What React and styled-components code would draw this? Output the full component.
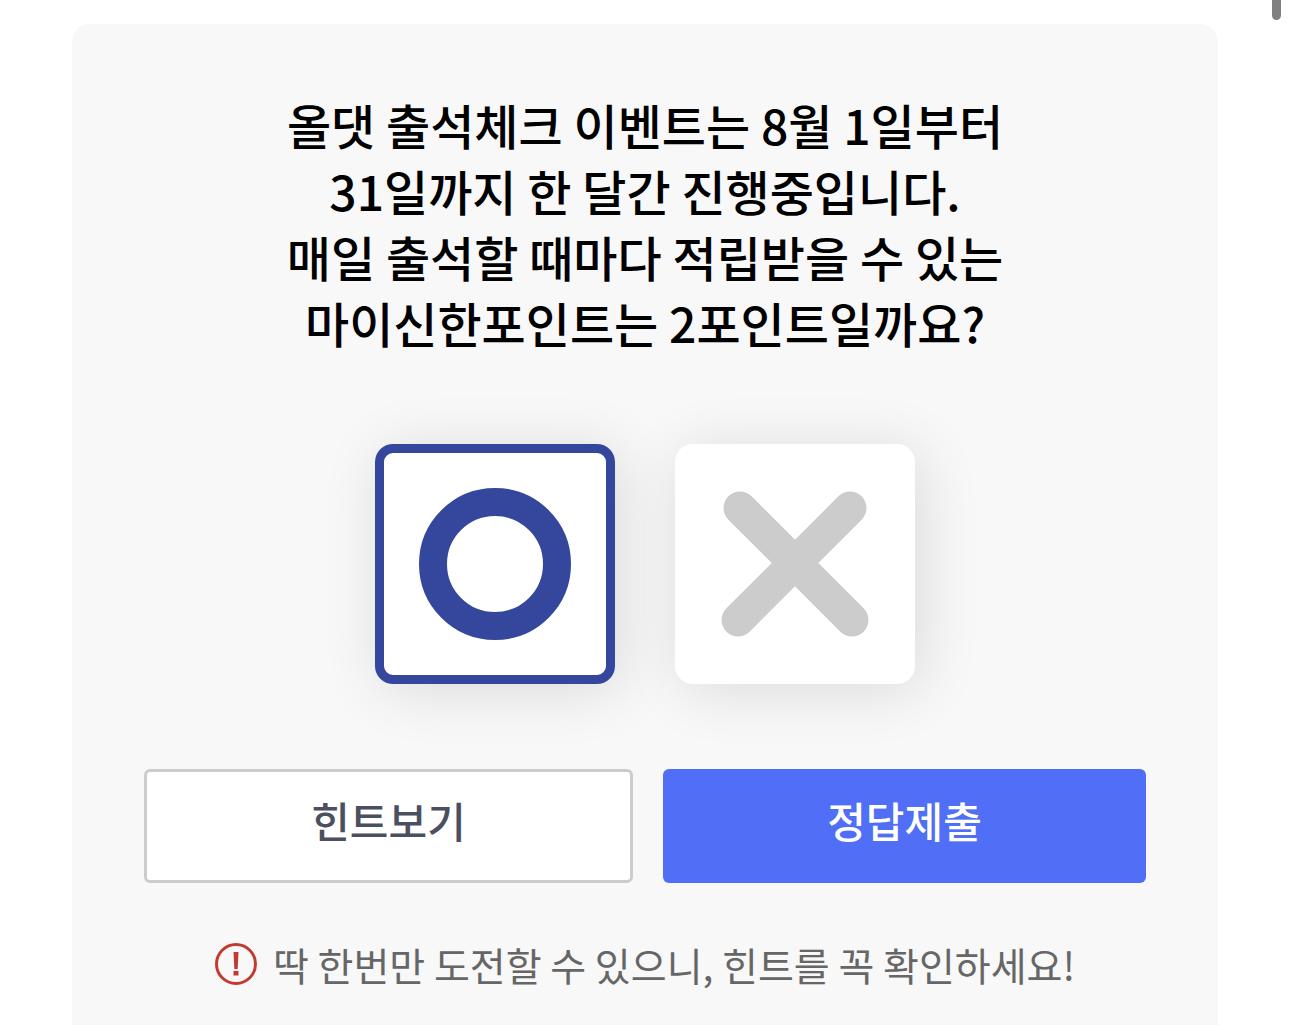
import React, { useState } from "react";
import styled, { createGlobalStyle } from "styled-components";

const GlobalStyle = createGlobalStyle`
  * {
    box-sizing: border-box;
  }
  html {
    scrollbar-width: none;
  }
  body {
    margin: 0;
    background: #fff;
    color: #000;
    font-family: "Noto Sans CJK KR", sans-serif;
  }
`;

const App = () => {
  const [answer, setAnswer] = useState("O");

  return (
    <>
      <GlobalStyle />
      <Page>
        <Quiz onSubmit={(e) => e.preventDefault()}>
          <Question>
            올댓 출석체크 이벤트는 8월 1일부터
            <br />
            31일까지 한 달간 진행중입니다.
            <br />
            매일 출석할 때마다 적립받을 수 있는
            <br />
            마이신한포인트는 2포인트일까요?
          </Question>

          {/* Answers */}
          <Answers>
            <Answer
              type="button"
              aria-label="O"
              aria-pressed={answer === "O"}
              $active={answer === "O"}
              onClick={() => setAnswer("O")}
            >
              <svg viewBox="0 0 240 240">
                <circle cx="120" cy="120" r="62" strokeWidth="28" />
              </svg>
            </Answer>
            <Answer
              type="button"
              aria-label="X"
              aria-pressed={answer === "X"}
              $active={answer === "X"}
              onClick={() => setAnswer("X")}
            >
              <svg viewBox="0 0 240 240">
                <path
                  d="M65 64 177 176M175 64 63 176"
                  strokeWidth="33"
                  strokeLinecap="round"
                />
              </svg>
            </Answer>
          </Answers>
          {/* end answers */}

          <Actions>
            <HintButton type="button">힌트보기</HintButton>
            <SubmitButton type="submit">정답제출</SubmitButton>
          </Actions>

          <Notice>
            <svg viewBox="0 0 42 42" aria-hidden="true">
              <circle cx="21" cy="21" r="19.5" />
              <path
                className="mark"
                d="M18.5 9h5l-.8 17h-3.4zM18.5 28h5v4.5h-5z"
              />
            </svg>
            <span>딱 한번만 도전할 수 있으니, 힌트를 꼭 확인하세요!</span>
          </Notice>
        </Quiz>
        <ScrollThumb />
      </Page>
    </>
  );
};

const Page = styled.main`
  position: relative;
  padding: 24px 72px 0;
`;

const Quiz = styled.form`
  display: flex;
  flex-direction: column;
  align-items: center;
  min-height: calc(100vh - 24px);
  padding: 67px 72px 32px;
  border-radius: 18px 18px 0 0;
  background: #f8f8f8;
`;

const Question = styled.h1`
  margin: 0;
  font-size: 48px;
  font-weight: 500;
  line-height: 66px;
  text-align: center;
`;

const Answers = styled.div`
  display: flex;
  justify-content: center;
  gap: 60px;
  margin-top: 89px;
`;

const Answer = styled.button`
  width: 240px;
  height: 240px;
  padding: 0;
  border: none;
  border-radius: 18px;
  background: #fff;
  box-shadow: ${({ $active }) => ($active ? "inset 0 0 0 9px #34479c, " : "")}
    6px 6px 60px rgba(0, 0, 0, 0.12);
  cursor: pointer;
  svg {
    display: block;
    width: 100%;
    fill: none;
    stroke: ${({ $active }) => ($active ? "#34479c" : "#ccc")};
  }
`;

const Actions = styled.div`
  display: flex;
  gap: 30px;
  width: 100%;
  margin-top: 85px;
`;

const Button = styled.button`
  flex: 1;
  height: 114px;
  padding: 0 0 14px;
  border: none;
  border-radius: 6px;
  font-family: inherit;
  font-size: 42px;
  font-weight: 500;
  cursor: pointer;
`;

const HintButton = styled(Button)`
  border: 3px solid #ccc;
  background: #fff;
  color: #4b4f60;
`;

const SubmitButton = styled(Button)`
  background: #506ef6;
  color: #fff;
`;

const Notice = styled.p`
  display: flex;
  align-items: center;
  gap: 16px;
  margin: 51px 0 0;
  color: #666;
  font-size: 39px;
  line-height: 60px;
  svg {
    width: 42px;
    height: 42px;
    fill: none;
    stroke: #c23a32;
    stroke-width: 3;
  }
  .mark {
    fill: #c23a32;
    stroke: none;
  }
`;

const ScrollThumb = styled.div`
  position: absolute;
  top: 0;
  right: 9px;
  width: 9px;
  height: 20px;
  border-radius: 0 0 5px 5px;
  background: #808080;
`;

export default App;
